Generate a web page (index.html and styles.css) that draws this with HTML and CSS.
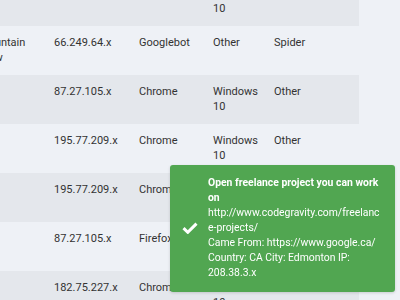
FILE: index.html
```html
<!doctype html>
<html>
<head>
  <link rel="stylesheet" href="styles.css">
</head>
<body>
  <div class="visits">
    <div class="row">
      <div class="cell loc"></div>
      <div class="cell">&nbsp;</div>
      <div class="cell"></div>
      <div class="cell">Windows 10</div>
      <div class="cell"></div>
    </div>
    <div class="row">
      <div class="cell loc">Mountain View</div>
      <div class="cell">66.249.64.x</div>
      <div class="cell">Googlebot</div>
      <div class="cell">Other</div>
      <div class="cell">Spider</div>
    </div>
    <div class="row">
      <div class="cell loc"></div>
      <div class="cell">87.27.105.x</div>
      <div class="cell">Chrome</div>
      <div class="cell">Windows 10</div>
      <div class="cell">Other</div>
    </div>
    <div class="row">
      <div class="cell loc"></div>
      <div class="cell">195.77.209.x</div>
      <div class="cell">Chrome</div>
      <div class="cell">Windows 10</div>
      <div class="cell">Other</div>
    </div>
    <div class="row">
      <div class="cell loc"></div>
      <div class="cell">195.77.209.x</div>
      <div class="cell">Chrome</div>
      <div class="cell">Windows 10</div>
      <div class="cell">Other</div>
    </div>
    <div class="row">
      <div class="cell loc"></div>
      <div class="cell">87.27.105.x</div>
      <div class="cell">Firefox</div>
      <div class="cell">Windows 10</div>
      <div class="cell">Other</div>
    </div>
    <div class="row">
      <div class="cell loc"></div>
      <div class="cell">182.75.227.x</div>
      <div class="cell">Chrome</div>
      <div class="cell">Windows 10</div>
      <div class="cell">Other</div>
    </div>
  </div>

  <div class="toast">
    <svg class="toast-icon" viewBox="0 0 16 12" width="16" height="12">
      <path d="M1.5 6.2 L5.8 10.3 L14.5 1.6" fill="none" stroke="#fff" stroke-width="3"/>
    </svg>
    <div class="toast-body">
      <div class="toast-title">Open freelance project you can work on</div>
      <div class="toast-msg">http://www.codegravity.com/freelance-projects/<br>Came From: https://www.google.ca/<br>Country: CA City: Edmonton IP: 208.38.3.x</div>
    </div>
  </div>
</body>
</html>
```

FILE: styles.css
```css
html, body {
  margin: 0;
  height: 100%;
  overflow: hidden;
  background: #eef1f6;
  font-family: Roboto, sans-serif;
  font-size: 11px;
  line-height: 15px;
  color: #333;
}
.visits {
  width: 380px;
  margin-left: -21px;
  margin-top: -23px;
}
.row {
  display: grid;
  grid-template-columns: 75px 85px 74px 61px 85px;
  padding: 9px 0 10px;
}
.row:nth-child(odd) {
  background: #e4e7ec;
}
.cell {
  padding-right: 8px;
}
.toast {
  position: fixed;
  right: 5px;
  bottom: 8px;
  width: 225px;
  box-sizing: border-box;
  display: flex;
  align-items: center;
  gap: 10px;
  padding: 10px 11px 12px 12px;
  background: #51a651;
  color: #fff;
  border-radius: 3px;
  font-size: 10.4px;
  box-shadow: 0 1px 3px rgba(0, 0, 0, 0.15);
}
.toast-icon {
  flex: none;
}
.toast-body {
  flex: 1;
  overflow-wrap: anywhere;
}
.toast-title {
  font-weight: bold;
}
```
